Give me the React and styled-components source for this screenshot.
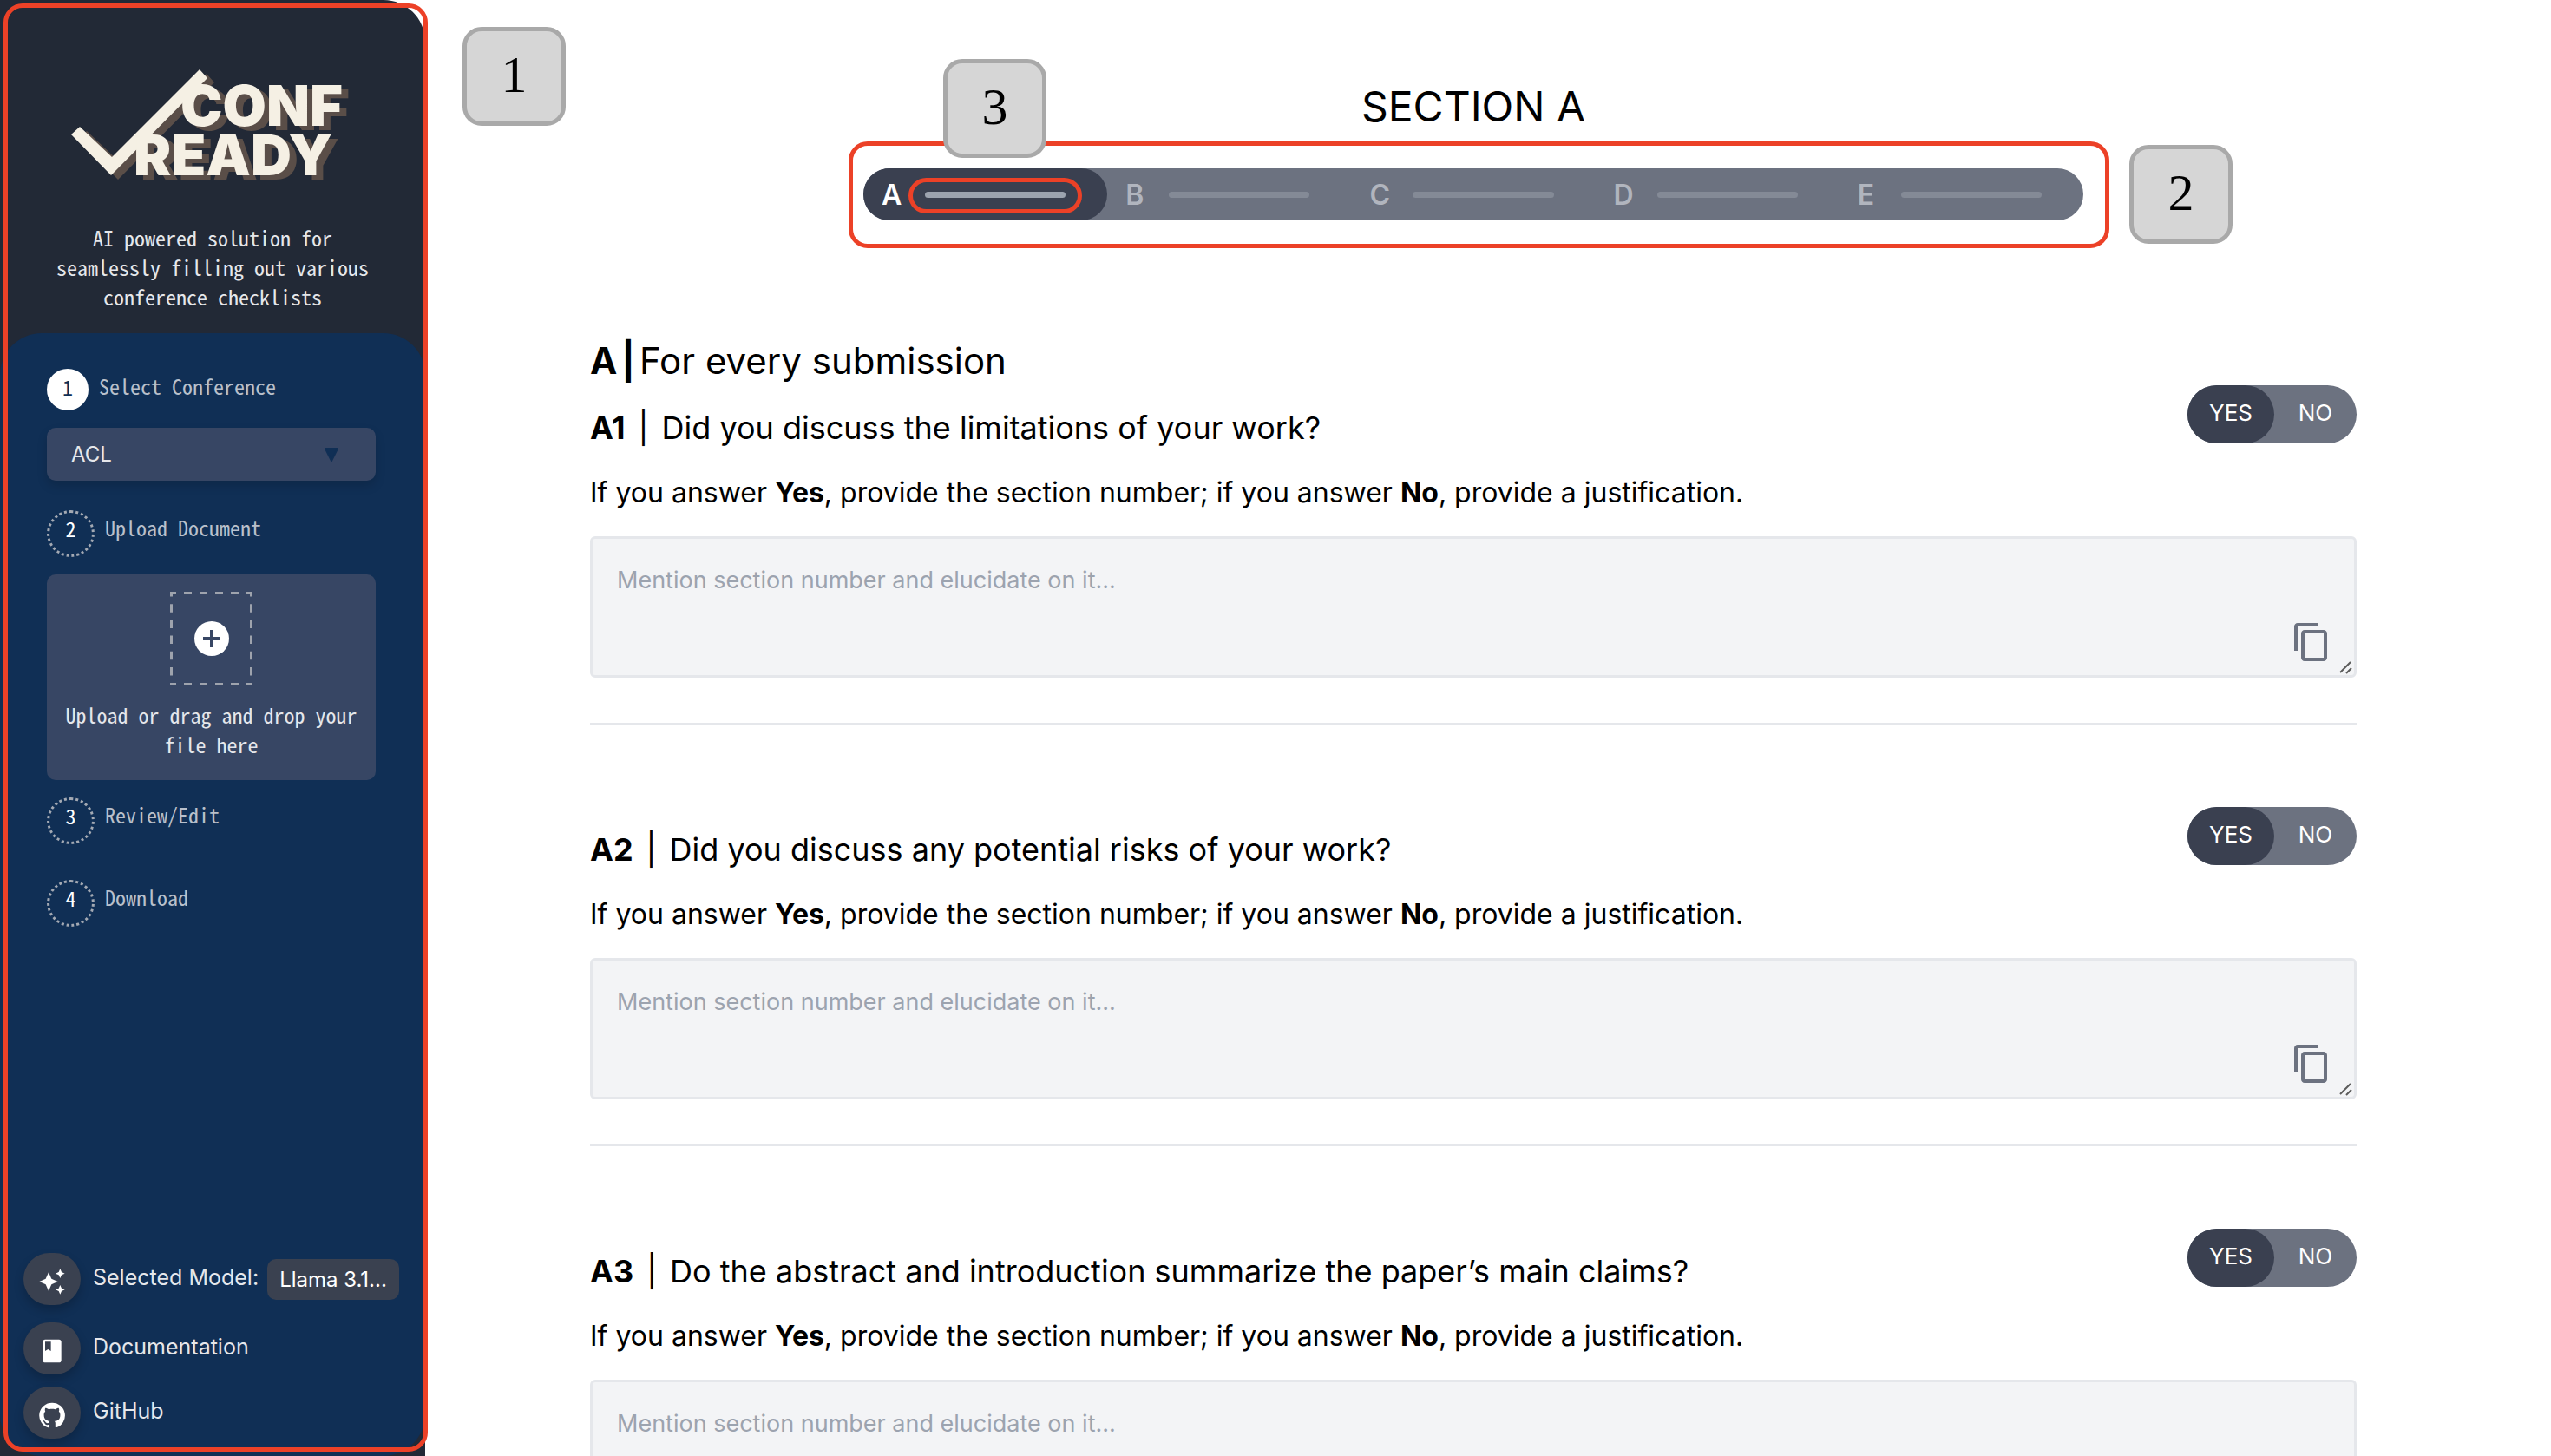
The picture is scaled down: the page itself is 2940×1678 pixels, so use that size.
import React, { useState } from "react";
import styled, { createGlobalStyle, css } from "styled-components";
import { MdAutoAwesome, MdBook, MdContentCopy } from "react-icons/md";

const sans = `Inter, "Liberation Sans", sans-serif`;
const mono = `"Noto Sans Mono CJK SC", "Liberation Mono", monospace`;

const GlobalStyle = createGlobalStyle`
    * {
        box-sizing: border-box;
    }
    body {
        margin: 0;
        background: #ffffff;
        color: #000000;
        font-family: ${sans};
    }
    button, select, textarea {
        font-family: inherit;
    }
`;

const Page = styled.div`
    display: flex;
    height: 100vh;
    overflow: hidden;
`;

/* sidebar */

const Sidebar = styled.aside`
    position: relative;
    z-index: 1;
    flex: none;
    display: flex;
    flex-direction: column;
    width: 490px;
    background: #222936;
    border-top-right-radius: 48px;
`;

const SidebarHeader = styled.header`
    display: flex;
    flex-direction: column;
    align-items: center;
    padding: 78px 56px 25px;
`;

const LogoImage = styled.svg`
    overflow: visible;
    filter: drop-shadow(8px 5px 0 #5a4e48);
`;

const Tagline = styled.p`
    margin: 29px 0 0;
    color: #e5e7eb;
    font-family: ${mono};
    font-size: 24px;
    font-weight: 300;
    line-height: 34px;
    text-align: center;
`;

const Panel = styled.div`
    flex: 1;
    display: flex;
    flex-direction: column;
    justify-content: space-between;
    padding: 41px 27px 20px;
    background: #102f55;
    border-radius: 48px;
`;

const Steps = styled.div`
    padding: 0 30px 0 27px;
`;

const Step = styled.div`
    display: flex;
    gap: 12px;
    margin-top: ${({ $space }) => $space || 0}px;
    font-family: ${mono};
    font-size: 24px;
    font-weight: 300;
    line-height: 40px;
    color: #b9c0cb;
`;

const StepNumber = styled.span`
    width: 55px;
    height: 54px;
    border: 3px dotted #a3a9b3;
    border-radius: 50%;
    color: #ffffff;
    line-height: 36px;
    text-align: center;
    ${({ $active }) =>
        $active &&
        css`
            width: 48px;
            height: 48px;
            border: 3px solid #ffffff;
            background: #ffffff;
            color: #102f55;
        `}
`;

const SelectWrap = styled.div`
    display: grid;
    align-items: center;
    margin-top: 20px;
    > * {
        grid-area: 1 / 1;
    }
    svg {
        justify-self: end;
        margin-right: 42px;
        pointer-events: none;
    }
`;

const ConferenceSelect = styled.select`
    appearance: none;
    width: 100%;
    height: 61px;
    padding: 0 28px;
    border: 0;
    border-radius: 10px;
    background: #374664;
    box-shadow: 0 6px 12px rgba(0, 0, 0, 0.15);
    color: #e5e7eb;
    font-size: 24px;
`;

const UploadBox = styled.label`
    display: flex;
    flex-direction: column;
    align-items: center;
    gap: 17px;
    height: 237px;
    margin-top: 20px;
    padding-top: 20px;
    border-radius: 10px;
    background: #374664;
    color: #e5e7eb;
    font-family: ${mono};
    font-size: 24px;
    font-weight: 300;
    line-height: 34px;
    text-align: center;
    cursor: pointer;
`;

const HiddenInput = styled.input`
    display: none;
`;

const Links = styled.nav`
    display: flex;
    flex-direction: column;
    gap: 14px;
`;

const LinkRow = styled.div`
    display: flex;
    align-items: center;
    margin-bottom: ${({ $space }) => $space || 0}px;
    color: #e5e7eb;
    font-size: 25px;
    line-height: 30px;
    a {
        color: inherit;
        text-decoration: none;
    }
`;

const LinkIcon = styled.span`
    display: flex;
    align-items: center;
    justify-content: center;
    width: 66px;
    height: 60px;
    margin-right: 14px;
    padding-top: 5px;
    border-radius: 30px;
    background: #3a4150;
    box-shadow: 0 6px 12px rgba(0, 0, 0, 0.2);
    color: #ffffff;
`;

const LinkText = styled.span`
    padding-bottom: 5px;
`;

const ModelButton = styled.button`
    width: 152px;
    height: 47px;
    margin-left: auto;
    margin-right: 3px;
    padding: 0;
    border: 0;
    border-radius: 10px;
    background: #3a4150;
    color: #ffffff;
    font-size: 24px;
`;

/* main column */

const Main = styled.main`
    position: relative;
    flex: 1;
    min-width: 0;
    padding: 93px 224px 0 190px;
    overflow-y: auto;
    scrollbar-width: none;
`;

const PageTitle = styled.h1`
    margin: 0 0 41px;
    font-size: 48px;
    font-weight: 400;
    line-height: 60px;
    text-align: center;
`;

const StepperWrap = styled.div`
    position: relative;
    margin: 0 315px;
`;

const Stepper = styled.div`
    display: flex;
    height: 60px;
    border-radius: 30px;
    background: #6c7280;
`;

const Segment = styled.button`
    flex: 1;
    display: flex;
    align-items: center;
    padding: 0 48px 0 21px;
    border: 0;
    border-radius: 30px;
    background: ${({ $active }) => ($active ? "#3a4050" : "transparent")};
    color: ${({ $active }) => ($active ? "#ffffff" : "#b1b5be")};
    font-size: 32px;
    font-weight: 600;
    text-align: left;
`;

const SegmentLetter = styled.span`
    width: 50px;
`;

const SegmentBar = styled.span`
    position: relative;
    flex: 1;
    height: 7px;
    border-radius: 4px;
    background: ${({ $active }) => ($active ? "#9ca3af" : "#848a96")};
`;

const SectionTitle = styled.h2`
    display: flex;
    gap: 5px;
    margin: 138px 0 4px;
    font-size: 42px;
    font-weight: 400;
    line-height: 48px;
`;

const QuestionBlock = styled.section`
    margin-bottom: 95px;
`;

const QuestionHeader = styled.div`
    display: flex;
    align-items: flex-start;
    justify-content: space-between;
`;

const QuestionTitle = styled.h3`
    display: flex;
    gap: 15px;
    margin: 25px 0 31px;
    font-size: 36px;
    font-weight: 400;
    line-height: 48px;
`;

const Instruction = styled.p`
    margin: 0 0 30px;
    font-size: 32px;
    line-height: 40px;
`;

const Toggle = styled.div`
    display: flex;
    height: 67px;
    border-radius: 34px;
    background: #6c7280;
`;

const ToggleOption = styled.button`
    width: ${({ $active }) => ($active ? 100 : 95)}px;
    padding: 0 0 4px;
    border: 0;
    border-radius: 34px;
    background: ${({ $active }) => ($active ? "#3a4050" : "transparent")};
    color: #ffffff;
    font-size: 26px;
`;

const AnswerWrap = styled.div`
    position: relative;
`;

const Answer = styled.textarea`
    display: block;
    width: 100%;
    height: 163px;
    padding: 30px 28px;
    border: 3px solid #e5e7eb;
    border-radius: 6px;
    background: #f3f4f6;
    font-size: 27px;
    line-height: 36px;
    resize: none;
    &::placeholder {
        color: #9ca3af;
    }
`;

const CopyButton = styled.button`
    position: absolute;
    right: 28px;
    bottom: 17px;
    display: flex;
    padding: 0;
    border: 0;
    background: none;
    color: #6c7280;
`;

const ResizeGrip = styled.svg`
    position: absolute;
    right: 4px;
    bottom: 4px;
`;

const Divider = styled.hr`
    height: 2px;
    margin: 52px 0 0;
    border: 0;
    background: #e5e7eb;
`;

/* callouts drawn over the page */

const Outline = styled.span`
    position: absolute;
    inset: ${({ $inset }) => $inset};
    border: 5px solid #ec4127;
    border-radius: 22px;
    pointer-events: none;
`;

const Badge = styled.span`
    position: absolute;
    top: ${({ $top }) => $top}px;
    left: ${({ $left }) => $left};
    display: flex;
    align-items: center;
    justify-content: center;
    width: 119px;
    height: 114px;
    padding-bottom: 4px;
    border: 5px solid #a9a9a9;
    border-radius: 22px;
    background: #d6d6d6;
    font-family: "Liberation Serif", serif;
    font-size: 60px;
    line-height: 60px;
`;

const Logo = () => (
    <LogoImage
        width="330"
        height="150"
        viewBox="0 0 330 150"
        fill="#f5f0e4"
        fontFamily="Inter, sans-serif"
        fontWeight="900"
        fontSize="65"
    >
        <path d="M150 2 L159 12 L48 124 L2 77 L12 68 L49 103 Z" />
        <text x="128" y="67">
            CONF
        </text>
        <text x="74" y="124">
            READY
        </text>
    </LogoImage>
);

const DropTarget = () => (
    <svg width="95" height="108" viewBox="0 0 95 108" fill="none">
        <g stroke="#9ea3ad" strokeWidth="3">
            <path d="M0 1.5H95M0 106.5H95" strokeDasharray="9 9" strokeDashoffset="2" />
            <path d="M1.5 0V108M93.5 0V108" strokeDasharray="9.5 8.7" strokeDashoffset="4" />
        </g>
        <circle cx="48" cy="54" r="20" fill="#ffffff" />
        <path d="M48 44V64M38 54H58" stroke="#374664" strokeWidth="4" />
    </svg>
);

const GitHubIcon = () => (
    <svg width="32" height="32" viewBox="0 0 24 24" fill="currentColor">
        <path d="M12 1.27a11 11 0 00-3.48 21.46c.55.09.73-.28.73-.55v-1.84c-3.03.64-3.67-1.46-3.67-1.46-.55-1.29-1.28-1.65-1.28-1.65-.92-.65.1-.65.1-.65 1.1 0 1.73 1.1 1.73 1.1.92 1.65 2.57 1.2 3.21.92a2 2 0 01.64-1.47c-2.47-.27-5.04-1.19-5.04-5.5 0-1.1.46-2.1 1.2-2.84a3.76 3.76 0 010-2.93s.91-.28 3.11 1.1c1.8-.49 3.7-.49 5.5 0 2.1-1.38 3.02-1.1 3.02-1.1a3.76 3.76 0 01.1 2.93c.83.74 1.2 1.74 1.2 2.94 0 4.21-2.57 5.13-5.04 5.4.45.37.82.92.82 2.02v3.03c0 .27.1.64.73.55A11 11 0 0012 1.27" />
    </svg>
);

const sections = ["A", "B", "C", "D", "E"];

const questions = [
    { id: "A1", text: "Did you discuss the limitations of your work?" },
    { id: "A2", text: "Did you discuss any potential risks of your work?" },
    { id: "A3", text: "Do the abstract and introduction summarize the paper’s main claims?" },
];

const Question = ({ id, text }) => {
    const [answer, setAnswer] = useState("YES");
    return (
        <QuestionBlock>
            <QuestionHeader>
                <div>
                    <QuestionTitle>
                        <b>{id}</b>
                        <span>|</span>
                        <span>{text}</span>
                    </QuestionTitle>
                    <Instruction>
                        If you answer <b>Yes</b>, provide the section number; if you answer <b>No</b>, provide a
                        justification.
                    </Instruction>
                </div>
                <Toggle role="group" aria-label={id}>
                    {["YES", "NO"].map((option) => (
                        <ToggleOption
                            key={option}
                            type="button"
                            aria-pressed={answer === option}
                            $active={answer === option}
                            onClick={() => setAnswer(option)}
                        >
                            {option}
                        </ToggleOption>
                    ))}
                </Toggle>
            </QuestionHeader>
            <AnswerWrap>
                <Answer aria-label={text} placeholder="Mention section number and elucidate on it..." />
                <CopyButton type="button" aria-label="Copy">
                    <MdContentCopy size={48} />
                </CopyButton>
                <ResizeGrip width="16" height="16" viewBox="0 0 16 16" stroke="#5c5c5c" strokeWidth="2">
                    <path d="M1 14L13 2M8 15L14 9" />
                </ResizeGrip>
            </AnswerWrap>
            <Divider />
        </QuestionBlock>
    );
};

const App = () => {
    const [section, setSection] = useState("A");
    return (
        <Page>
            <GlobalStyle />
            <Sidebar>
                <SidebarHeader>
                    <Logo />
                    <Tagline>AI powered solution for seamlessly filling out various conference checklists</Tagline>
                </SidebarHeader>
                <Panel>
                    <Steps>
                        <Step>
                            <StepNumber $active>1</StepNumber>
                            <label htmlFor="conference">Select Conference</label>
                        </Step>
                        <SelectWrap>
                            <ConferenceSelect id="conference">
                                <option>ACL</option>
                            </ConferenceSelect>
                            <svg width="18" height="18" viewBox="0 0 18 18">
                                <path
                                    d="M2 2H16L9 16Z"
                                    fill="#102f55"
                                    stroke="#102f55"
                                    strokeWidth="2"
                                    strokeLinejoin="round"
                                />
                            </svg>
                        </SelectWrap>
                        <Step $space={34}>
                            <StepNumber>2</StepNumber>
                            <span>Upload Document</span>
                        </Step>
                        <UploadBox>
                            <HiddenInput type="file" />
                            <DropTarget />
                            Upload or drag and drop your file here
                        </UploadBox>
                        <Step $space={20}>
                            <StepNumber>3</StepNumber>
                            <span>Review/Edit</span>
                        </Step>
                        <Step $space={41}>
                            <StepNumber>4</StepNumber>
                            <span>Download</span>
                        </Step>
                    </Steps>
                    <Links>
                        <LinkRow $space={6}>
                            <LinkIcon>
                                <MdAutoAwesome size={32} />
                            </LinkIcon>
                            <LinkText>Selected Model:</LinkText>
                            <ModelButton type="button">Llama 3.1...</ModelButton>
                        </LinkRow>
                        <LinkRow>
                            <LinkIcon>
                                <MdBook size={32} />
                            </LinkIcon>
                            <LinkText as="a" href="#documentation">
                                Documentation
                            </LinkText>
                        </LinkRow>
                        <LinkRow>
                            <LinkIcon>
                                <GitHubIcon />
                            </LinkIcon>
                            <LinkText as="a" href="#github">
                                GitHub
                            </LinkText>
                        </LinkRow>
                    </Links>
                </Panel>
                <Outline $inset="4px -3px 5px 4px" />
            </Sidebar>
            <Main>
                <Badge $top={31} $left="43px">
                    1
                </Badge>
                <PageTitle>SECTION {section}</PageTitle>
                <StepperWrap>
                    <Stepper>
                        {sections.map((name) => (
                            <Segment
                                key={name}
                                type="button"
                                $active={name === section}
                                onClick={() => setSection(name)}
                            >
                                <SegmentLetter>{name}</SegmentLetter>
                                <SegmentBar $active={name === section}>
                                    {name === "A" && <Outline $inset="-16px -19px -18px" />}
                                </SegmentBar>
                            </Segment>
                        ))}
                    </Stepper>
                    <Outline $inset="-31px -30px -32px -17px" />
                    <Badge $top={-126} $left="92px">
                        3
                    </Badge>
                    <Badge $top={-27} $left="calc(100% + 53px)">
                        2
                    </Badge>
                </StepperWrap>
                <SectionTitle>
                    <b>A</b>
                    <b>|</b>
                    <span>For every submission</span>
                </SectionTitle>
                {questions.map((question) => (
                    <Question key={question.id} {...question} />
                ))}
            </Main>
        </Page>
    );
};

export default App;
